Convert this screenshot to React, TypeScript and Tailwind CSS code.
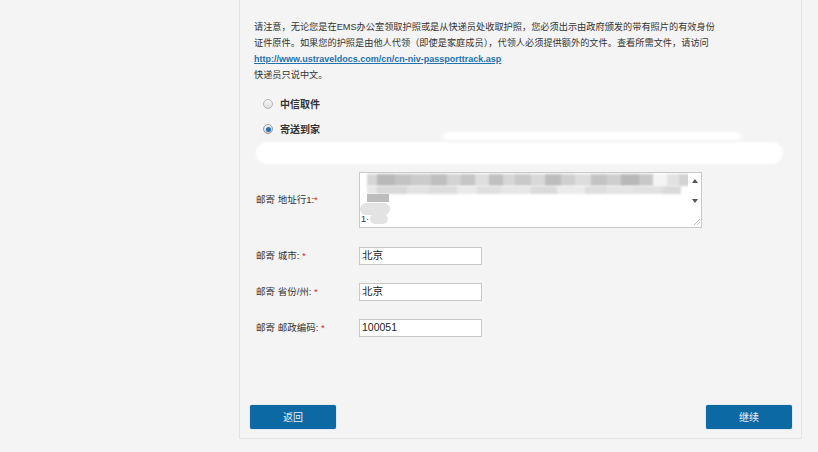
import React from 'react';

const font = { fontFamily: '"Liberation Sans", "Noto Sans CJK SC", sans-serif' };

// pixelated (redacted) address text
const mosaicTop = [
  'w-[10px] bg-[#d6d6d6]',
  'w-[18px] bg-[#b9b9b9]',
  'w-[16px] bg-[#c3c3c3]',
  'w-[20px] bg-[#cbcbcb]',
  'w-[16px] bg-[#bfbfbf]',
  'w-[14px] bg-[#d3d3d3]',
  'w-[14px] bg-[#c6c6c6]',
  'w-[14px] bg-[#dedede]',
  'w-[14px] bg-[#c0c0c0]',
  'w-[12px] bg-[#d6d6d6]',
  'w-[16px] bg-[#c9c9c9]',
  'w-[14px] bg-[#d9d9d9]',
  'w-[16px] bg-[#bdbdbd]',
  'w-[14px] bg-[#d0d0d0]',
  'w-[16px] bg-[#dddddd]',
  'w-[16px] bg-[#c4c4c4]',
  'w-[14px] bg-[#cecece]',
  'w-[18px] bg-[#b8b8b8]',
  'w-[14px] bg-[#c8c8c8]',
  'w-[14px] bg-[#f4f4f4]',
  'w-[12px] bg-[#e2e2e2]',
  'w-[16px] bg-[#d3d3d3]',
  'w-[14px] bg-[#dadada]',
  'w-[16px] bg-[#c1c1c1]',
];

const mosaicBottom = [
  'w-[10px] bg-[#e6e6e6]',
  'w-[30px] bg-[#d8d8d8]',
  'w-[22px] bg-[#e2e2e2]',
  'w-[28px] bg-[#dcdcdc]',
  'w-[20px] bg-[#e9e9e9]',
  'w-[24px] bg-[#dfdfdf]',
  'w-[30px] bg-[#e6e6e6]',
  'w-[26px] bg-[#dadada]',
  'w-[28px] bg-[#ebebeb]',
  'w-[22px] bg-[#dedede]',
  'w-[26px] bg-[#e4e4e4]',
  'w-[30px] bg-[#e1e1e1]',
  'w-[18px] bg-[#d9d9d9]',
];

function Req() {
  return <span className="text-[#d9262b]">*</span>;
}

function FieldRow({ label, value }: { label: React.ReactNode; value: string }) {
  return (
    <div className="flex items-center">
      <div className="w-[103px] text-[9.5px] text-[#333]">{label}</div>
      <div className="flex h-[18px] w-[123px] items-center border border-[#c8c8c8] bg-white px-[2px] text-[10.5px] text-[#222]">
        {value}
      </div>
    </div>
  );
}

export default function App() {
  return (
    <div className="h-[452px] w-[818px] overflow-hidden bg-[#f4f4f4]" style={font}>
      <div className="ml-[239px] flex h-[439px] w-[563px] flex-col border-x border-b border-[#e2e2e2] px-[9px]">
        {/* notice */}
        <div className="pl-[5px] pt-[19px] text-[9.2px] leading-[16px] text-[#333]">
          <p>请注意，无论您是在EMS办公室领取护照或是从快递员处收取护照，您必须出示由政府颁发的带有照片的有效身份</p>
          <p>证件原件。如果您的护照是由他人代领（即使是家庭成员），代领人必须提供额外的文件。查看所需文件，请访问</p>
          <p>
            <a href="#" className="text-[9px] font-bold text-[#2472ae] underline">
              http://www.ustraveldocs.com/cn/cn-niv-passporttrack.asp
            </a>
          </p>
          <p>快递员只说中文。</p>
        </div>

        {/* delivery options */}
        <div className="mt-[14px] flex flex-col gap-[11px] pl-[14px]">
          <label className="flex h-[14px] items-center gap-[7px]">
            <span className="h-[10px] w-[10px] rounded-full border border-[#b5b5b5] bg-gradient-to-b from-[#f8f8f8] to-[#dcdcdc]" />
            <span className="text-[10px] font-bold text-[#333]">中信取件</span>
          </label>
          <label className="flex h-[14px] items-center gap-[7px]">
            <span className="flex h-[10px] w-[10px] items-center justify-center rounded-full border border-[#9a9a9a] bg-gradient-to-b from-[#f4f4f4] to-[#d0d0d0]">
              <span className="h-[5px] w-[5px] rounded-full bg-[#2b6fb0]" />
            </span>
            <span className="text-[10px] font-bold text-[#333]">寄送到家</span>
          </label>
        </div>

        {/* redacted line */}
        <div className="relative -mt-[4px] h-[32px]">
          <div className="absolute left-[194px] top-0 h-[8px] w-[298px] rounded-full bg-white blur-[1px]" />
          <div className="absolute left-[7px] top-[10px] h-[22px] w-[527px] rounded-full bg-white blur-[1px]" />
        </div>

        {/* address */}
        <div className="mt-[8px] flex items-center pl-[7px]">
          <div className="w-[103px] text-[9.5px] text-[#333]">
            邮寄 地址行1:<Req />
          </div>
          <div className="flex h-[56px] w-[343px] border border-[#c8c8c8] bg-white">
            <div className="flex-1 overflow-hidden pl-[7px] pt-[1px]">
              <div className="flex h-[12px] blur-[1px]">
                {mosaicTop.map((c, i) => (
                  <div key={i} className={`h-full shrink-0 ${c}`} />
                ))}
              </div>
              <div className="flex h-[8px] blur-[1px]">
                {mosaicBottom.map((c, i) => (
                  <div key={i} className={`h-full shrink-0 ${c}`} />
                ))}
              </div>
              <div className="h-[8px] w-[22px] bg-[#bdbdbd] blur-[0.5px]" />
              <div className="-ml-[7px] mt-[1px] h-[12px] w-[30px] rounded-full bg-[#e3e3e3] blur-[0.5px]" />
              <div className="-ml-[6px] -mt-[1px] flex items-center text-[9px] leading-[10px] text-[#333]">
                1·<span className="ml-[1px] h-[10px] w-[18px] rounded-full bg-[#e3e3e3]" />
              </div>
            </div>
            <div className="flex w-[13px] flex-col items-center justify-between pb-[2px] pt-[6px]">
              <svg width="6" height="4" viewBox="0 0 6 4">
                <path d="M3 0L6 4H0Z" fill="#555" />
              </svg>
              <svg width="6" height="4" viewBox="0 0 6 4">
                <path d="M0 0H6L3 4Z" fill="#555" />
              </svg>
              <svg width="6" height="6" viewBox="0 0 6 6" className="self-end mr-[1px]">
                <path d="M6 0L0 6M6 3L3 6" stroke="#b0b0b0" strokeWidth="0.8" />
              </svg>
            </div>
          </div>
        </div>

        {/* city / province / postcode */}
        <div className="mt-[19px] flex flex-col gap-[18px] pl-[7px]">
          <FieldRow
            label={
              <>
                邮寄 城市: <Req />
              </>
            }
            value="北京"
          />
          <FieldRow
            label={
              <>
                邮寄 省份/州: <Req />
              </>
            }
            value="北京"
          />
          <FieldRow
            label={
              <>
                邮寄 邮政编码: <Req />
              </>
            }
            value="100051"
          />
        </div>

        {/* actions */}
        <div className="mb-[9px] mt-auto flex justify-between pl-[1px]">
          <button className="h-[24px] w-[86px] rounded-[2px] bg-[#0d69a3] text-[10px] text-[#e6eef5] shadow-[0_0_1px_#3b8fd0]">
            返回
          </button>
          <button className="h-[24px] w-[86px] rounded-[2px] bg-[#0d69a3] text-[10px] text-[#e6eef5] shadow-[0_0_1px_#3b8fd0]">
            继续
          </button>
        </div>
      </div>
    </div>
  );
}
